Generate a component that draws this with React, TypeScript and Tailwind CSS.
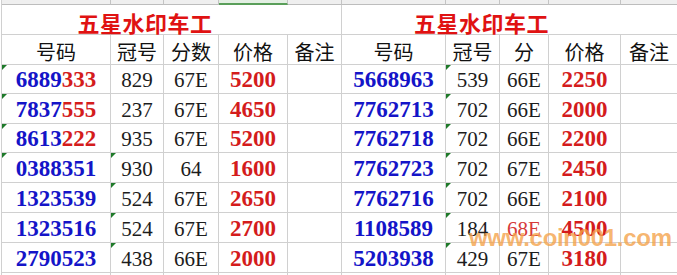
import type { ReactNode } from 'react'

const COLS = [109, 53, 55, 69, 54, 104, 54, 49, 72, 57]
const ROW_HEIGHTS = [29, 30, 29, 30, 30, 30, 30]

interface Row {
  num:   string
  tail?: string   // red trailing digits
  guan:  string
  fen:   string
  fenRed?: boolean
  price: string
  markA?: boolean
  markB?: boolean
}

const LEFT: Row[] = [
  { num: '6889', tail: '333', guan: '829', fen: '67E', price: '5200', markA: true },
  { num: '7837', tail: '555', guan: '237', fen: '67E', price: '4650', markA: true },
  { num: '8613', tail: '222', guan: '935', fen: '67E', price: '5200', markA: true },
  { num: '0388351', guan: '930', fen: '64', price: '1600', markA: true, markB: true },
  { num: '1323539', guan: '524', fen: '67E', price: '2650', markB: true },
  { num: '1323516', guan: '524', fen: '67E', price: '2700', markB: true },
  { num: '2790523', guan: '438', fen: '66E', price: '2000', markB: true },
]

const RIGHT: Row[] = [
  { num: '5668963', guan: '539', fen: '66E', price: '2250', markB: true },
  { num: '7762713', guan: '702', fen: '66E', price: '2000', markB: true },
  { num: '7762718', guan: '702', fen: '66E', price: '2200', markB: true },
  { num: '7762723', guan: '702', fen: '67E', price: '2450', markB: true },
  { num: '7762716', guan: '702', fen: '66E', price: '2100', markB: true },
  { num: '1108589', guan: '184', fen: '68E', fenRed: true, price: '4500', markB: true },
  { num: '5203938', guan: '429', fen: '67E', price: '3180', markB: true },
]

const cjk = "font-['Noto_Sans_CJK_SC',sans-serif]"
const serif = "font-['Liberation_Serif','Times_New_Roman',serif]"

function Cell({ children, mark, last }: { children?: ReactNode; mark?: boolean; last?: boolean }) {
  return (
    <div
      className={`relative flex items-end justify-center pb-[2px] border-b border-[#d0d0d0] ${last ? '' : 'border-r'} border-r-[#d0d0d0]`}
    >
      {mark && (
        <span className="absolute left-0 top-0 w-0 h-0 border-t-[5px] border-r-[5px] border-t-[#1f7a2a] border-r-transparent" />
      )}
      {children}
    </div>
  )
}

function DataCells({ row }: { row: Row }) {
  return (
    <>
      <Cell mark={row.markA}>
        <span className={`${serif} text-[23px] leading-none font-bold text-[#1414c8]`}>
          {row.num}
          {row.tail && <span className="text-[#d41c1c]">{row.tail}</span>}
        </span>
      </Cell>
      <Cell mark={row.markB}>
        <span className={`${serif} text-[21px] leading-none text-[#1c1c1c]`}>{row.guan}</span>
      </Cell>
      <Cell>
        <span className={`${serif} text-[21px] leading-none ${row.fenRed ? 'text-[#d63a3a]' : 'text-[#1c1c1c]'}`}>
          {row.fen}
        </span>
      </Cell>
      <Cell>
        <span className={`${serif} text-[23px] leading-none font-bold text-[#d41c1c]`}>{row.price}</span>
      </Cell>
      <Cell />
    </>
  )
}

export default function App() {
  const headersL = ['号码', '冠号', '分数', '价格', '备注']
  const headersR = ['号码', '冠号', '分', '价格', '备注']

  return (
    <div className="relative w-[677px] h-[275px] overflow-hidden bg-white">
      <div
        className="ml-[1px] grid border-l border-[#d0d0d0] w-max"
        style={{
          gridTemplateColumns: COLS.map((c) => `${c}px`).join(' '),
          gridTemplateRows: ['5px', '30px', '30px', ...ROW_HEIGHTS.map((h) => `${h}px`), '20px'].join(' '),
        }}
      >
        {/* column letter strip */}
        {COLS.map((_, i) => (
          <div
            key={`s${i}`}
            className={
              i === 3
                ? 'bg-[#e3efe3] border-b-2 border-b-[#5a9f5a] border-r border-r-[#c4c4c4]'
                : 'bg-[#efefef] border-b border-b-[#bdbdbd] border-r border-r-[#c4c4c4]'
            }
          />
        ))}

        {/* titles */}
        <div className="col-span-5 flex items-end border-b border-r border-[#d0d0d0] pb-[1px]">
          <div className="w-[286px] flex justify-center">
            <span className={`${cjk} text-[22px] leading-none font-bold text-[#e01212] tracking-[0.5px]`}>五星水印车工</span>
          </div>
        </div>
        <div className="col-span-5 flex items-end border-b border-r border-[#d0d0d0] pb-[1px]">
          <div className="w-[279px] flex justify-center">
            <span className={`${cjk} text-[22px] leading-none font-bold text-[#e01212] tracking-[0.5px]`}>五星水印车工</span>
          </div>
        </div>

        {/* headers */}
        {[...headersL, ...headersR].map((h, i) => (
          <div key={`h${i}`} className="flex items-end justify-center pb-[2px] border-b border-r border-[#d0d0d0]">
            <span className={`${cjk} text-[20px] leading-none text-[#111]`}>{h}</span>
          </div>
        ))}

        {/* data rows */}
        {LEFT.map((row, i) => (
          <div key={`r${i}`} className="contents">
            <DataCells row={row} />
            <DataCells row={RIGHT[i]!} />
          </div>
        ))}

        {/* partial row */}
        {COLS.map((_, i) => (
          <div key={`p${i}`} className="border-r border-[#d0d0d0]" />
        ))}
      </div>

      {/* watermark */}
      <div className="absolute left-[469px] top-[226px] font-['Liberation_Sans',Arial,sans-serif] text-[24px] font-bold leading-none text-[#f4a24a]/80 tracking-[-0.3px]">
        www.coin001.com
      </div>
    </div>
  )
}
